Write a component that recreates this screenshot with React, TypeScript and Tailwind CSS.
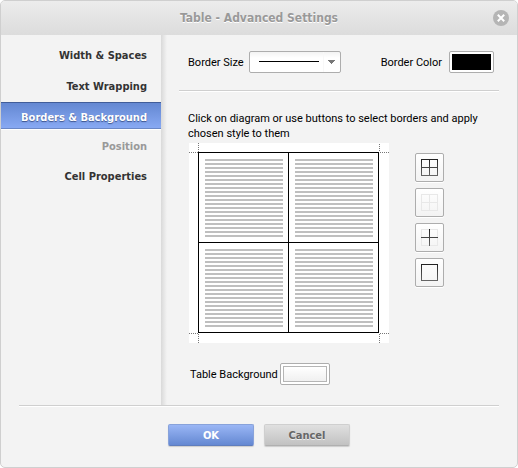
import React from "react";

type Item = { label: string; state?: "active" | "disabled" };

const items: Item[] = [
  { label: "Width & Spaces" },
  { label: "Text Wrapping" },
  { label: "Borders & Background", state: "active" },
  { label: "Position", state: "disabled" },
  { label: "Cell Properties" },
];

function MenuItem({ label, state }: Item) {
  if (state === "active") {
    return (
      <button
        type="button"
        aria-current="page"
        className="h-[27px] w-full border-t border-b border-t-[#415d99] border-b-[#6a87c6] bg-linear-to-b from-[#6488d2] to-[#88a9f3] pt-1 pr-3.5 text-right font-bold whitespace-nowrap text-white shadow-[0_1px_0_#fff] [text-shadow:0_1px_1px_#3b528c]"
      >
        {label}
      </button>
    );
  }
  if (state === "disabled") {
    return (
      <button type="button" disabled className="mt-[3px] h-[29px] w-full pr-3.5 text-right font-bold text-[#999]">
        {label}
      </button>
    );
  }
  return (
    <button type="button" className="h-[31px] w-full pr-3.5 text-right font-bold text-[#333]">
      {label}
    </button>
  );
}

const stripes = Array.from({ length: 20 }, (_, i) => i * 4);

function Cell({ x, y }: { x: number; y: number }) {
  return (
    <g fill="#bfbfbf">
      {stripes.map((s) => (
        <rect key={s} x={x} y={y + s} width="78" height="2" />
      ))}
    </g>
  );
}

function Diagram() {
  return (
    <svg width="200" height="200" viewBox="0 0 200 200" shapeRendering="crispEdges" role="img" aria-label="Table borders diagram" className="ml-px bg-white">
      <Cell x={16} y={16} />
      <Cell x={106} y={16} />
      <Cell x={16} y={106} />
      <Cell x={106} y={106} />
      <path
        d="M9.5 0V9M0 9.5H9M190.5 1V9M191 9.5H200M0 190.5H9M9.5 191V200M190.5 191V200M191 190.5H200"
        stroke="#777"
        strokeDasharray="1 1"
        fill="none"
      />
      <path d="M9.5 9.5H189.5V189.5H9.5ZM99.5 9V190M9 99.5H190" stroke="#000" fill="none" />
    </svg>
  );
}

const OUTER = "M.5 .5H16.5V16.5H.5Z";

function BorderButton({ label, outer, inner }: { label: string; outer: string; inner: string }) {
  return (
    <button
      type="button"
      aria-label={label}
      className="flex size-[29px] items-center justify-center rounded-xs border border-[#adadad] bg-linear-to-b from-white to-[#f3f3f3] shadow-[0_1px_0_#fff]"
    >
      <svg width="17" height="17" viewBox="0 0 17 17" fill="none" shapeRendering="crispEdges">
        <defs>
          <linearGradient id="ink" gradientUnits="userSpaceOnUse" x1="0" y1="0" x2="0" y2="17">
            <stop stopColor="#222" />
            <stop offset="1" stopColor="#666" />
          </linearGradient>
        </defs>
        {outer && <path d={OUTER} stroke={outer} />}
        {inner && <path d="M8.5 0V17M0 8.5H17" stroke={inner} />}
      </svg>
    </button>
  );
}

export default function App() {
  return (
    <div className="flex w-full flex-col overflow-hidden rounded-[5px] border border-[#cfcfcf] bg-[#f3f3f3] font-['Tahoma','DejaVu_Sans_Condensed','Noto_Sans',sans-serif] text-[11px] leading-[15px] text-black">
      <header className="flex h-[34px] items-center bg-linear-to-b from-[#ececec] to-[#dcdcdc] pr-2">
        <h1 className="flex-1 pl-6 text-center text-xs font-bold text-[#999] [text-shadow:0_1px_0_#fff]">
          Table - Advanced Settings
        </h1>
        <button type="button" aria-label="Close" className="flex size-4 items-center justify-center rounded-full bg-[#b5b5b5]">
          <svg width="8" height="8" viewBox="0 0 8 8" stroke="#fff" strokeWidth="2">
            <path d="M.8 .8L7.2 7.2M7.2 .8L.8 7.2" />
          </svg>
        </button>
      </header>

      <div className="flex">
        <nav className="w-40 shrink-0 pt-[5px]">
          {items.map((item) => (
            <MenuItem key={item.label} {...item} />
          ))}
        </nav>
        <div className="w-[6px] shrink-0 bg-linear-to-r from-[#d9d9d9] to-[#f3f3f3]" />

        <main className="flex-1 pt-4 pb-5 pr-[18px] pl-3 font-['Tahoma','Roboto',sans-serif]">
          <div className="flex items-center justify-between border-b border-[#cfcfcf] pr-[5px] pb-[17px] pl-[9px] shadow-[0_1px_0_#fff]">
            <div className="flex items-center gap-[5px]">
              <label htmlFor="size" className="min-w-14">Border Size</label>
              <div className="relative">
                <select
                  id="size"
                  className="block h-[22px] w-[92px] appearance-none rounded-xs border border-[#adadad] bg-linear-to-b from-[#f3f3f3] to-white to-30% text-transparent"
                >
                  <option>1 px</option>
                </select>
                <svg width="92" height="22" viewBox="0 0 92 22" className="pointer-events-none absolute inset-0" shapeRendering="crispEdges">
                  <path d="M10 10.5H70" stroke="#000" />
                  <path d="M74.5 1V21" stroke="#f8f8f8" />
                  <path d="M78 9H86L82 13Z" fill="#777" />
                </svg>
              </div>
            </div>
            <div className="flex items-center gap-[7px]">
              <label htmlFor="color">Border Color</label>
              <input
                id="color"
                type="color"
                defaultValue="#000000"
                className="h-[22px] w-[45px] appearance-none rounded-xs border border-[#adadad] bg-white p-[2px] [&::-webkit-color-swatch]:rounded-none [&::-webkit-color-swatch]:border-0 [&::-webkit-color-swatch-wrapper]:p-0"
              />
            </div>
          </div>

          <p className="mt-5 pr-4 pl-[9px]">
            Click on diagram or use buttons to select borders and apply chosen style to them
          </p>

          <div className="mt-[2px] flex gap-[26px] pl-[9px]">
            <Diagram />
            <div className="flex flex-col gap-[6px] pt-[10px]">
              <BorderButton label="All borders" outer="url(#ink)" inner="url(#ink)" />
              <BorderButton label="No borders" outer="#e8e8e8" inner="#e8e8e8" />
              <BorderButton label="Inner borders" outer="#e8e8e8" inner="url(#ink)" />
              <BorderButton label="Outer borders" outer="url(#ink)" inner="" />
            </div>
          </div>

          <div className="mt-5 flex items-center gap-[2px] pl-[11px]">
            <label htmlFor="background">Table Background</label>
            <button id="background" type="button" className="h-[22px] w-[50px] rounded-xs border border-[#adadad] bg-white p-[2px]">
              <span className="block h-full border border-[#b5b5b5] bg-linear-to-b from-white to-[#f0f0f0]" />
            </button>
          </div>
        </main>
      </div>

      <footer className="mx-[18px] flex justify-center gap-[10px] border-t border-[#cfcfcf] pt-[18px] pb-[21px] shadow-[inset_0_1px_0_#fff]">
        <button
          type="button"
          className="h-[22px] w-[86px] rounded-xs border border-[#88a2da] border-b-[#5f7dbd] bg-linear-to-b from-[#9ab6f5] to-[#6488d2] font-bold text-white shadow-[0_1px_1px_#ccc]"
        >
          OK
        </button>
        <button
          type="button"
          className="h-[22px] w-[86px] rounded-xs border border-[#cfcfcf] border-b-[#b0b0b0] bg-linear-to-b from-[#e0e0e0] to-[#c2c2c2] font-bold text-[#666] shadow-[0_1px_1px_#ccc] [text-shadow:0_1px_0_#eee]"
        >
          Cancel
        </button>
      </footer>
    </div>
  );
}
